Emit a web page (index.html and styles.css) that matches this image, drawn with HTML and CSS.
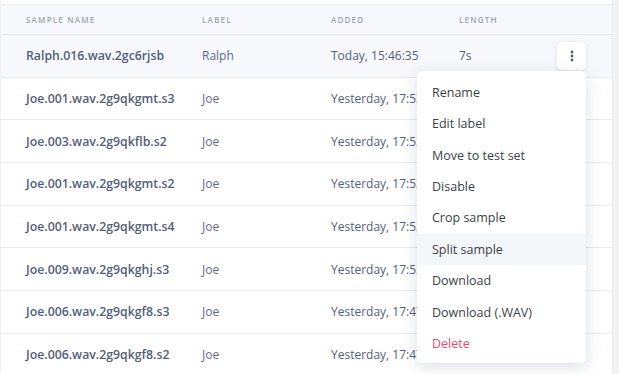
FILE: index.html
```html
<!DOCTYPE html>
<html lang="en">
<head>
    <meta charset="UTF-8">
    <meta name="viewport" content="width=device-width, initial-scale=1.0">
    <title>Samples</title>
    <link rel="stylesheet" href="styles.css">
</head>
<body>
    <div class="page">
        <div class="panel">
            <table class="samples">
                <thead>
                    <tr>
                        <th class="col-name">Sample name</th>
                        <th class="col-label">Label</th>
                        <th class="col-added">Added</th>
                        <th class="col-length">Length</th>
                        <th class="col-actions"></th>
                    </tr>
                </thead>
                <tbody>
                    <tr class="active">
                        <td class="name">Ralph.016.wav.2gc6rjsb</td>
                        <td class="label">Ralph</td>
                        <td class="added">Today, 15:46:35</td>
                        <td class="length">7s</td>
                        <td class="actions">
                            <div class="menu-wrap">
                                <button class="kebab" type="button" aria-label="Actions">
                                    <svg width="4" height="12" viewBox="0 0 4 12">
                                        <circle cx="2" cy="2" r="1.4" fill="#4d5b78"/>
                                        <circle cx="2" cy="6" r="1.4" fill="#4d5b78"/>
                                        <circle cx="2" cy="10" r="1.4" fill="#4d5b78"/>
                                    </svg>
                                </button>
                                <ul class="menu">
                                    <li>Rename</li>
                                    <li>Edit label</li>
                                    <li>Move to test set</li>
                                    <li>Disable</li>
                                    <li>Crop sample</li>
                                    <li class="hover">Split sample</li>
                                    <li>Download</li>
                                    <li>Download (.WAV)</li>
                                    <li class="danger">Delete</li>
                                </ul>
                            </div>
                        </td>
                    </tr>
                    <tr>
                        <td class="name">Joe.001.wav.2g9qkgmt.s3</td>
                        <td class="label">Joe</td>
                        <td class="added">Yesterday, 17:53</td>
                        <td class="length"></td>
                        <td class="actions"></td>
                    </tr>
                    <tr>
                        <td class="name">Joe.003.wav.2g9qkflb.s2</td>
                        <td class="label">Joe</td>
                        <td class="added">Yesterday, 17:52</td>
                        <td class="length"></td>
                        <td class="actions"></td>
                    </tr>
                    <tr>
                        <td class="name">Joe.001.wav.2g9qkgmt.s2</td>
                        <td class="label">Joe</td>
                        <td class="added">Yesterday, 17:52</td>
                        <td class="length"></td>
                        <td class="actions"></td>
                    </tr>
                    <tr>
                        <td class="name">Joe.001.wav.2g9qkgmt.s4</td>
                        <td class="label">Joe</td>
                        <td class="added">Yesterday, 17:52</td>
                        <td class="length"></td>
                        <td class="actions"></td>
                    </tr>
                    <tr>
                        <td class="name">Joe.009.wav.2g9qkghj.s3</td>
                        <td class="label">Joe</td>
                        <td class="added">Yesterday, 17:52</td>
                        <td class="length"></td>
                        <td class="actions"></td>
                    </tr>
                    <tr>
                        <td class="name">Joe.006.wav.2g9qkgf8.s3</td>
                        <td class="label">Joe</td>
                        <td class="added">Yesterday, 17:47</td>
                        <td class="length"></td>
                        <td class="actions"></td>
                    </tr>
                    <tr>
                        <td class="name">Joe.006.wav.2g9qkgf8.s2</td>
                        <td class="label">Joe</td>
                        <td class="added">Yesterday, 17:47</td>
                        <td class="length"></td>
                        <td class="actions"></td>
                    </tr>
                </tbody>
            </table>
        </div>
        <div class="gutter"></div>
    </div>
</body>
</html>
```

FILE: styles.css
```css
* {
    box-sizing: border-box;
}
body {
    font-family: 'Open Sans', 'Noto Sans', sans-serif;
    margin: 0;
    background-color: #fff;
    overflow: hidden;
}
.page {
    display: flex;
    height: 374px;
}
.panel {
    width: 613px;
    padding-top: 4px;
    border-left: 1px solid #edf0f4;
    border-right: 1px solid #e9edf2;
    background-color: #fff;
}
.gutter {
    flex: 1;
    background-color: #f1f3f6;
}
.samples {
    width: 100%;
    border-collapse: collapse;
    table-layout: fixed;
}
.samples th {
    height: 30px;
    padding: 0;
    text-align: left;
    font-size: 8px;
    font-weight: 600;
    letter-spacing: 1.2px;
    text-transform: uppercase;
    color: #9ca5b6;
    background-color: #f6f8fb;
    border-top: 1px solid #eceff3;
    border-bottom: 1px solid #e6eaf0;
}
.samples td {
    height: 42.7px;
    padding: 0;
    border-bottom: 1px solid #e9ecf1;
    font-size: 12px;
    color: #55607c;
    white-space: nowrap;
}
.col-name {
    width: 201px;
    padding-left: 25px !important;
}
.col-label {
    width: 129px;
}
.col-added {
    width: 128px;
}
.col-length {
    width: 98px;
}
.samples td.name {
    padding-left: 25px;
    font-size: 12.3px;
    font-weight: 600;
    color: #535e7b;
}
.samples td.label {
    color: #5f6983;
}
.samples tr.active td {
    background-color: #f6f8fb;
}
.actions {
    position: relative;
}
.menu-wrap {
    position: relative;
    width: 29px;
}
.kebab {
    display: flex;
    align-items: center;
    justify-content: center;
    width: 29px;
    height: 28px;
    padding: 0;
    border: none;
    border-radius: 5px;
    background-color: #fff;
    box-shadow: 0 1px 4px rgba(40, 55, 90, 0.12);
    cursor: pointer;
}
.menu {
    position: absolute;
    top: 29px;
    right: 0;
    z-index: 10;
    width: 169px;
    margin: 0;
    padding: 6px 0 4px;
    list-style: none;
    background-color: #fff;
    border-radius: 6px;
    box-shadow: 0 4px 16px rgba(40, 55, 90, 0.16);
}
.menu li {
    height: 31.4px;
    line-height: 31px;
    padding-left: 15px;
    font-size: 12.5px;
    color: #3b3f48;
}
.menu li.hover {
    background-color: #f4f7fa;
}
.menu li.danger {
    color: #f2496b;
}
```
